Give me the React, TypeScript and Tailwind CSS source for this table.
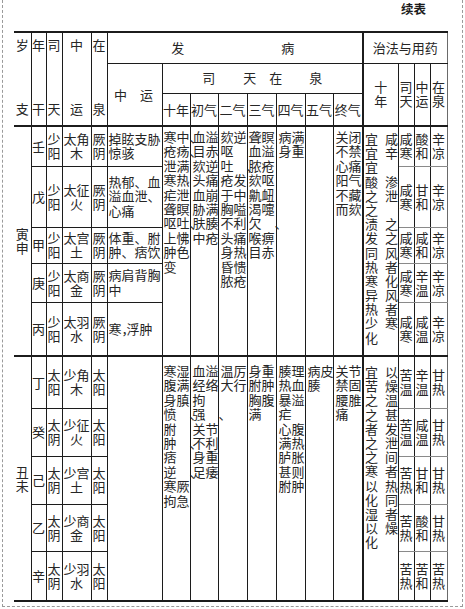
import React from "react";

const cell = "border border-solid border-[#1c1c1c] p-0";

type Row = {
  h: string;
  gan: string;
  st: string;
  zy: [string, string];
  zq: string;
  detail: string[];
  r: [string, string, string];
};

const upperRows: Row[] = [
  { h: "h-[40px]", gan: "壬", st: "少阳", zy: ["太角", "木"], zq: "厥阴", detail: ["掉眩支胁", "惊骇"], r: ["咸寒", "酸和", "辛凉"] },
  { h: "h-[61px]", gan: "戊", st: "少阳", zy: ["太征", "火"], zq: "厥阴", detail: ["热郁、血", "溢血泄、", "心痛"], r: ["咸寒", "甘和", "辛凉"] },
  { h: "h-[36px]", gan: "甲", st: "少阳", zy: ["太宫", "土"], zq: "厥阴", detail: ["体重、胕", "肿、痞饮"], r: ["咸寒", "咸和", "辛凉"] },
  { h: "h-[39px]", gan: "庚", st: "少阳", zy: ["太商", "金"], zq: "厥阴", detail: ["病肩背胸", "中"], r: ["咸寒", "辛温", "辛凉"] },
  { h: "h-[54px]", gan: "丙", st: "少阳", zy: ["太羽", "水"], zq: "厥阴", detail: ["寒，浮肿"], r: ["咸寒", "咸温", "辛凉"] },
];

const lowerRows: Row[] = [
  { h: "h-[52px]", gan: "丁", st: "太阳", zy: ["少角", "木"], zq: "太阳", detail: [], r: ["苦温", "辛温", "甘热"] },
  { h: "h-[48px]", gan: "癸", st: "太阴", zy: ["少征", "火"], zq: "太阳", detail: [], r: ["苦温", "咸温", "甘热"] },
  { h: "h-[48px]", gan: "己", st: "太阴", zy: ["少宫", "土"], zq: "太阳", detail: [], r: ["苦热", "甘和", "甘热"] },
  { h: "h-[47px]", gan: "乙", st: "太阴", zy: ["少商", "金"], zq: "太阳", detail: [], r: ["苦热", "酸和", "甘热"] },
  { h: "h-[50px]", gan: "辛", st: "太阴", zy: ["少羽", "水"], zq: "太阳", detail: [], r: ["苦热", "苦和", "苦热"] },
];

// 司天在泉: 十年 初气 二气 三气 四气 五气 终气
const upperQi: { pl: string; lines: string[] }[] = [
  { pl: "pl-[1px]", lines: ["寒中、", "疮疡、", "泄满", "寒热", "疟泄", "聋瞑", "呕吐、", "上怫", "肿色", "变"] },
  { pl: "pl-[2px]", lines: ["血溢", "目赤", "欬逆", "头痛", "血崩", "胁满", "肤腠", "中疮"] },
  { pl: "pl-[2px]", lines: ["欬逆", "呕", "吐　、", "疮发", "于中", "胸嗌", "不利", "头痛", "身热", "昏愦", "脓疮"] },
  { pl: "pl-[1px]", lines: ["聋瞑", "血溢", "脓疮", "欬呕", "鼽衄", "渴嚏", "欠　、", "喉痹", "目赤"] },
  { pl: "pl-[2px]", lines: ["病满", "身重"] },
  { pl: "pl-[2px]", lines: [] },
  { pl: "pl-[2px]", lines: ["关闭", "不禁", "心痛", "阳气", "不藏", "而欬"] },
];

const lowerQi: { pl: string; lines: string[] }[] = [
  { pl: "pl-[1px]", lines: ["寒湿", "腹满", "身䐜", "愤　、", "胕", "肿　、", "痞", "逆　、", "寒厥", "拘急"] },
  { pl: "pl-[2px]", lines: ["血溢", "经络", "拘", "强　、", "关节", "不利", "身重", "足痿"] },
  { pl: "pl-[2px]", lines: ["温厉", "大行"] },
  { pl: "pl-[1px]", lines: ["身重", "胕肿", "胸腹", "满"] },
  { pl: "pl-[2px]", lines: ["腠理", "热血", "暴溢", "疟", "心腹", "满热", "胪胀", "甚则", "胕肿"] },
  { pl: "pl-[2px]", lines: ["病皮", "腠"] },
  { pl: "pl-[2px]", lines: ["关节", "禁固", "腰脽", "痛"] },
];

// 治法 十年, read across in pairs
const upperFa = ["宜咸", "宜辛", "宜　", "酸渗", "之泄", "之　", "渍之", "发之", "同风", "热者", "寒化", "异风", "热者", "少寒", "化"];
const lowerFa = ["宜以", "苦燥", "之温", "之甚", "者发", "之泄", "之间", "寒者", "以热", "化同", "湿者", "以燥", "化"];

function Txt({ s }: { s: string }) {
  const chars = Array.from(s);
  return (
    <span className="whitespace-nowrap">
      {chars.map((ch, i) =>
        ch === "，" || (ch === "、" && i === chars.length - 1) ? (
          <span key={i} className="inline-block w-[5px] overflow-visible">
            {ch}
          </span>
        ) : (
          <React.Fragment key={i}>{ch}</React.Fragment>
        )
      )}
    </span>
  );
}

function Lines({ lines, className = "" }: { lines: string[]; className?: string }) {
  return (
    <div className={`flex flex-col ${className}`}>
      {lines.map((l, i) => (
        <div key={i} className="h-[14.4px] leading-[14.4px] whitespace-nowrap">
          <Txt s={l} />
        </div>
      ))}
    </div>
  );
}

function Stack({ s }: { s: string }) {
  return (
    <div className="flex flex-col items-center leading-[14px]">
      {Array.from(s).map((ch, i) => (
        <span key={i}>{ch}</span>
      ))}
    </div>
  );
}

function Pairs({ lines, className = "" }: { lines: string[]; className?: string }) {
  return (
    <div className={`flex flex-col ${className}`}>
      {lines.map((l, i) => {
        const [a, b] = Array.from(l);
        return (
          <div key={i} className="grid grid-cols-[13px_13px] gap-x-[7px] h-[14.2px] leading-[14.2px] pl-[1px]">
            <span>{a}</span>
            <span>{b ?? ""}</span>
          </div>
        );
      })}
    </div>
  );
}

function HeadPair({ top, bottom }: { top: string; bottom: string }) {
  return (
    <div className="h-[92px] flex flex-col items-center justify-between pt-[5px] pb-[9px] leading-[14px]">
      <span>{top}</span>
      <span>{bottom}</span>
    </div>
  );
}

function Group({ rows, qi, fa, zhi, lower }: { rows: Row[]; qi: { pl: string; lines: string[] }[]; fa: string[]; zhi: string; lower: boolean }) {
  const first = "border-t-2";
  const last = lower ? "border-b-2" : "";
  return (
    <>
      {rows.map((row, i) => {
        const top = i === 0 ? first : "";
        const bot = i === rows.length - 1 ? last : "";
        const rb = i === rows.length - 1 ? "" : "border-b-[#8a8a8a]";
        return (
          <tr key={row.gan} className={row.h}>
            {i === 0 && (
              <td rowSpan={5} className={`${cell} ${top} ${last} border-l-0 align-middle`}>
                <Stack s={zhi} />
              </td>
            )}
            <td className={`${cell} ${top} ${bot} text-center align-middle`}>{row.gan}</td>
            <td className={`${cell} ${top} ${bot} align-middle`}>
              <Stack s={row.st} />
            </td>
            <td className={`${cell} ${top} ${bot} align-middle`}>
              <div className="flex flex-col items-center leading-[14px]">
                <span>{row.zy[0]}</span>
                <span>{row.zy[1]}</span>
              </div>
            </td>
            <td className={`${cell} ${top} ${bot} align-middle`}>
              <Stack s={row.zq} />
            </td>
            {!lower && (
              <td className={`${cell} ${top} ${bot} align-middle`}>
                <Lines lines={row.detail} className="pl-[1px]" />
              </td>
            )}
            {lower && i === 0 && <td rowSpan={5} className={`${cell} ${top} ${last}`} />}
            {i === 0 &&
              qi.map((q, k) => (
                <td key={k} rowSpan={5} className={`${cell} ${top} ${last} align-top`}>
                  <Lines lines={q.lines} className={`${q.pl} ${lower ? "pt-[7px]" : "pt-[3px]"}`} />
                </td>
              ))}
            {i === 0 && (
              <td rowSpan={5} className={`${cell} ${top} ${last} border-l-2 align-top`}>
                <Pairs lines={fa} className={lower ? "pt-[8px]" : "pt-[5px]"} />
              </td>
            )}
            {row.r.map((t, k) => (
              <td key={k} className={`${cell} ${top} ${bot} ${rb} ${k === 2 ? "border-r-[#6a6a6a]" : ""} align-middle`}>
                <Stack s={t} />
              </td>
            ))}
          </tr>
        );
      })}
    </>
  );
}

export default function App() {
  const widths = ["w-[17px]", "w-[15px]", "w-[16px]", "w-[29px]", "w-[16px]", "w-[55px]", "w-[28px]", "w-[28px]", "w-[29px]", "w-[29px]", "w-[29px]", "w-[28px]", "w-[30px]", "w-[35px]", "w-[16px]", "w-[16px]", "w-[17px]"];
  const qiHeads = ["十年", "初气", "二气", "三气", "四气", "五气", "终气"];
  return (
    <div className="w-[465px] h-[609px] bg-white px-[2px] font-['Noto_Sans_CJK_SC','Noto_Sans_CJK_JP',sans-serif] text-[13px] text-[#262626] overflow-hidden">
      <div className="h-[607px] border-x border-b border-dashed border-[#9a9a9a]">
        <div className="h-[31px] flex justify-end pr-[36px] pt-[1px]">
          <span className="font-bold text-[12.5px] leading-[16px] text-[#1c1c1c]">续表</span>
        </div>
        <div className="pl-[11px]">
          <table className="table-fixed border-collapse w-[433px]">
            <colgroup>
              {widths.map((w, i) => (
                <col key={i} className={w} />
              ))}
            </colgroup>
            <tbody>
              <tr className="h-[31px]">
                <td rowSpan={3} className={`${cell} border-t-2 border-l-0`}>
                  <HeadPair top="岁" bottom="支" />
                </td>
                <td rowSpan={3} className={`${cell} border-t-2`}>
                  <HeadPair top="年" bottom="干" />
                </td>
                <td rowSpan={3} className={`${cell} border-t-2`}>
                  <HeadPair top="司" bottom="天" />
                </td>
                <td rowSpan={3} className={`${cell} border-t-2`}>
                  <HeadPair top="中" bottom="运" />
                </td>
                <td rowSpan={3} className={`${cell} border-t-2`}>
                  <HeadPair top="在" bottom="泉" />
                </td>
                <td colSpan={8} className={`${cell} border-t-2 align-middle`}>
                  <div className="flex justify-center gap-[97px] pr-[4px]">
                    <span>发</span>
                    <span>病</span>
                  </div>
                </td>
                <td colSpan={4} className={`${cell} border-t-2 border-l-2 border-r-[#6a6a6a] text-center align-middle`}>
                  治法与用药
                </td>
              </tr>
              <tr className="h-[30px]">
                <td rowSpan={2} className={`${cell} align-middle`}>
                  <div className="flex justify-center gap-[13px] pr-[2px]">
                    <span>中</span>
                    <span>运</span>
                  </div>
                </td>
                <td colSpan={7} className={`${cell} align-middle`}>
                  <div className="flex justify-center">
                    <span>司</span>
                    <span className="ml-[28px]">天</span>
                    <span className="ml-[13px]">在</span>
                    <span className="ml-[27px]">泉</span>
                  </div>
                </td>
                <td rowSpan={2} className={`${cell} border-l-2 align-middle`}>
                  <Stack s="十年" />
                </td>
                <td rowSpan={2} className={`${cell} align-middle`}>
                  <Stack s="司天" />
                </td>
                <td rowSpan={2} className={`${cell} align-middle`}>
                  <Stack s="中运" />
                </td>
                <td rowSpan={2} className={`${cell} border-r-[#6a6a6a] align-middle`}>
                  <Stack s="在泉" />
                </td>
              </tr>
              <tr className="h-[33px]">
                {qiHeads.map((q) => (
                  <td key={q} className={`${cell} text-center align-middle`}>
                    {q}
                  </td>
                ))}
              </tr>
              <Group rows={upperRows} qi={upperQi} fa={upperFa} zhi="寅申" lower={false} />
              <Group rows={lowerRows} qi={lowerQi} fa={lowerFa} zhi="丑未" lower={true} />
            </tbody>
          </table>
        </div>
      </div>
    </div>
  );
}
